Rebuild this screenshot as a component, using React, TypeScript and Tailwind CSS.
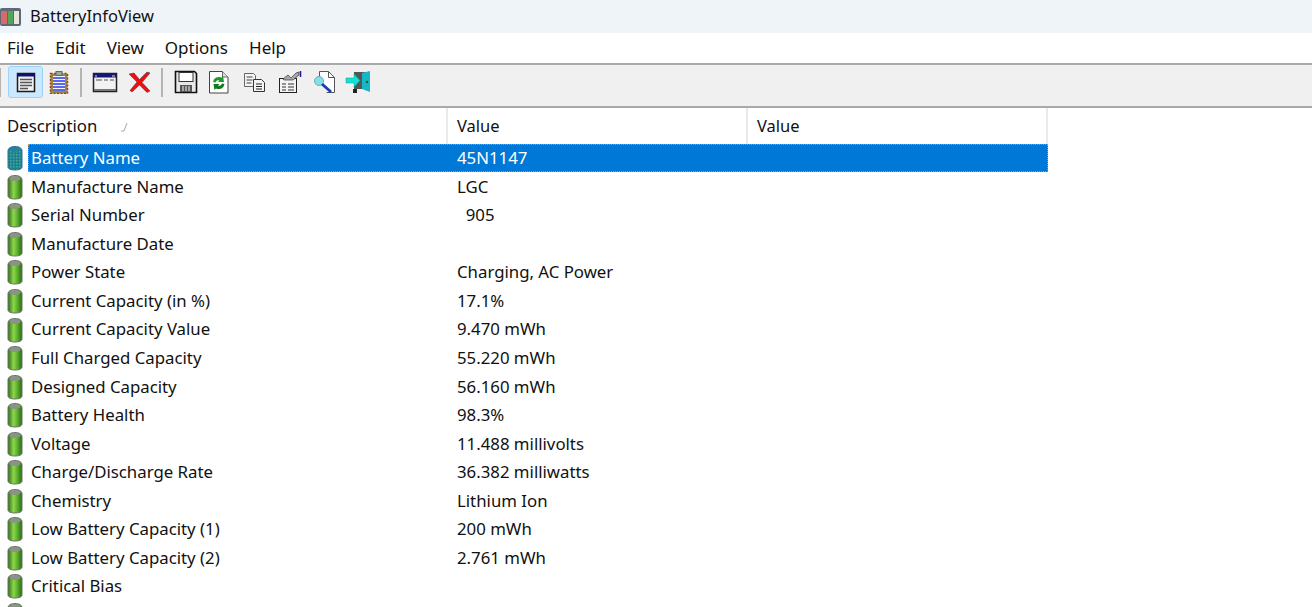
import React from "react";

const rows: [string, string][] = [
  ["Battery Name", "45N1147"],
  ["Manufacture Name", "LGC"],
  ["Serial Number", "\u00a0\u00a0905"],
  ["Manufacture Date", ""],
  ["Power State", "Charging, AC Power"],
  ["Current Capacity (in %)", "17.1%"],
  ["Current Capacity Value", "9.470 mWh"],
  ["Full Charged Capacity", "55.220 mWh"],
  ["Designed Capacity", "56.160 mWh"],
  ["Battery Health", "98.3%"],
  ["Voltage", "11.488 millivolts"],
  ["Charge/Discharge Rate", "36.382 milliwatts"],
  ["Chemistry", "Lithium Ion"],
  ["Low Battery Capacity (1)", "200 mWh"],
  ["Low Battery Capacity (2)", "2.761 mWh"],
  ["Critical Bias", ""],
  ["Number of charge/discharge cycles", "0"],
];

function BatteryIcon({ selected }: { selected?: boolean }) {
  return (
    <svg width="16" height="26" viewBox="0 0 16 26" className="shrink-0">
      <defs>
        <linearGradient id="cell" x1="0" x2="1" y1="0" y2="0">
          <stop offset="0" stopColor="#2f6f18" />
          <stop offset="0.4" stopColor="#8ed64a" />
          <stop offset="0.7" stopColor="#55a82a" />
          <stop offset="1" stopColor="#2a6a14" />
        </linearGradient>
        <pattern id="dots" width="3" height="3" patternUnits="userSpaceOnUse">
          <rect width="3" height="3" fill="#1f7f8f" />
          <rect width="1.5" height="1.5" fill="#3fb08f" />
        </pattern>
      </defs>
      <path d="M1 6c0-3 3-4.500 7-4.500s7 1.500 7 4.500v16c0 2-3 3-7 3s-7-1-7-3z" fill={selected ? "url(#dots)" : "url(#cell)"} stroke={selected ? "#2a6f9f" : "#6b7568"} strokeWidth="1" />
      <ellipse cx="8" cy="4.500" rx="5.500" ry="2.500" fill={selected ? "#2a7f9a" : "#8c928a"} />
    </svg>
  );
}

function ToolIcon({ name }: { name: string }) {
  switch (name) {
    case "report":
      return (
        <svg width="24" height="24" viewBox="0 0 24 24">
          <rect x="3.500" y="3.500" width="17" height="18" fill="#f0f0f0" stroke="#1a1a1a" strokeWidth="1.500" />
          <rect x="3" y="3" width="18" height="3.500" fill="#12126e" />
          <path d="M6 9.500h12M6 12.500h12M6 15.500h12M6 18.500h8" stroke="#555" strokeWidth="1.500" />
        </svg>
      );
    case "clipboard":
      return (
        <svg width="24" height="24" viewBox="0 0 24 24">
          <rect x="3.500" y="3.500" width="17" height="20" fill="#9a8a3a" stroke="#a5352a" strokeDasharray="2 1.500" strokeWidth="1.500" />
          <rect x="6" y="6" width="12" height="15" fill="#f4f4ff" />
          <path d="M6 8h12M6 11h12M6 14h12M6 17h12M6 20h12" stroke="#2a3adf" strokeWidth="1.600" />
          <rect x="9" y="1.500" width="6" height="4" fill="#8fb09a" stroke="#667" />
        </svg>
      );
    case "window":
      return (
        <svg width="26" height="24" viewBox="0 0 26 24">
          <rect x="1.500" y="3.500" width="23" height="18" fill="#f2f2f2" stroke="#222" strokeWidth="1.500" />
          <rect x="2" y="4" width="22" height="3.500" fill="#16167a" />
          <path d="M3 6h2M20 6h3" stroke="#ddd" strokeWidth="1" />
          <path d="M4 10h6M12 10h4M18 10h4" stroke="#888" strokeWidth="1.500" />
          <path d="M2 20h22" stroke="#777" strokeWidth="2" />
        </svg>
      );
    case "delete":
      return (
        <svg width="24" height="24" viewBox="0 0 24 24">
          <path d="M1 4l5-1 5.500 6.500L19 2l3 1-8 9.500 8 8.500-3 1.500-7.500-7.500L4 22l-2-1.500 7-8.500z" fill="#ee1010" stroke="#333" strokeWidth="0.500" />
        </svg>
      );
    case "save":
      return (
        <svg width="24" height="24" viewBox="0 0 24 24">
          <path d="M1.500 1.500h19l2 2v19h-21z" fill="#e8e8e8" stroke="#111" strokeWidth="1.600" />
          <rect x="5" y="2.500" width="14" height="9" fill="#fff" stroke="#333" />
          <rect x="6" y="15" width="12" height="7" fill="#555" />
          <path d="M9 16v5M12 16v5M15 16v5" stroke="#ddd" strokeWidth="1.200" />
        </svg>
      );
    case "refresh":
      return (
        <svg width="24" height="24" viewBox="0 0 24 24">
          <path d="M2.500 1.500h13l5.500 5.500v16h-18.500z" fill="#fff" stroke="#444" />
          <path d="M15.500 1.500v5.500h5.500" fill="#ddd" stroke="#666" />
          <path d="M6 12a6 6 0 0 1 8.500-4.500l1.500-1.500 1 6h-6l1.500-1.500a3 3 0 0 0-4 2z" fill="#1d9a2a" />
          <path d="M17.500 14a6 6 0 0 1-8.500 4.500l-1.500 1.500-1-6h6l-1.500 1.500a3 3 0 0 0 4-2z" fill="#0f7a1f" />
        </svg>
      );
    case "copy":
      return (
        <svg width="24" height="24" viewBox="0 0 24 24">
          <path d="M1.500 3.500h9l2 2v11h-11z" fill="#f4f4f4" stroke="#666" />
          <path d="M3.500 7h6M3.500 10h6M3.500 13h5" stroke="#444" />
          <path d="M10.500 9.500h8l3 3v9h-11z" fill="#f4f4f4" stroke="#333" />
          <path d="M13 14h6M13 16.500h6M13 19h6" stroke="#222" />
        </svg>
      );
    case "props":
      return (
        <svg width="26" height="24" viewBox="0 0 26 24">
          <rect x="2.500" y="8.500" width="17" height="14" fill="#f4f4f4" stroke="#222" />
          <path d="M5 14h4M11 14h6M5 17h4M11 17h6M5 20h4M11 20h6" stroke="#333" />
          <path d="M6 9l5-4 3 3 5-5 3-1v3l-6 5H7z" fill="#aaa" stroke="#333" strokeWidth="0.700" />
          <path d="M23.500 1v6" stroke="#1a1a8a" strokeWidth="1.500" />
        </svg>
      );
    case "find":
      return (
        <svg width="24" height="24" viewBox="0 0 24 24">
          <path d="M6.500 1.500h9l6 6v15h-8" fill="#fff" stroke="#555" />
          <path d="M6.500 1.500v6M15.500 1.500v6h6" fill="none" stroke="#555" />
          <circle cx="6" cy="11" r="4.500" fill="#7fe0e8" stroke="#7ab" />
          <path d="M9 14l9 8" stroke="#1a3fb0" strokeWidth="3" />
        </svg>
      );
    default:
      return (
        <svg width="26" height="24" viewBox="0 0 26 24">
          <path d="M9 2h12v17H9z" fill="#555" />
          <path d="M17 3l8-2v21l-8-3z" fill="#16b8c4" />
          <circle cx="22" cy="12" r="1.200" fill="#063" />
          <path d="M1 8h8V4l6 6.500-6 6.500v-4H1z" fill="#14e0d8" stroke="#0a8" strokeWidth="0.500" />
          <path d="M8 19h4v4H8z" fill="#222" />
        </svg>
      );
  }
}

function Slot({ w, name }: { w: string; name: string }) {
  return (
    <div className={`${w} h-[32px] flex items-center justify-center`}>
      <ToolIcon name={name} />
    </div>
  );
}

export default function App() {
  return (
    <div className="w-[1312px] h-[607px] overflow-hidden bg-white text-[#111] text-[17px] font-['Noto_Sans','Open_Sans',sans-serif]">
      {/* title bar */}
      <div className="h-[33px] bg-[#eff4f9] flex items-center gap-[8px] text-[16.5px]">
        <svg width="22" height="20" viewBox="0 0 22 20">
          <rect x="0" y="1" width="21" height="18" rx="2" fill="#5d6878" />
          <rect x="1" y="4" width="6" height="13" fill="#d86a6a" />
          <rect x="8" y="4" width="5" height="13" fill="#4fa85a" />
          <rect x="14" y="4" width="5" height="13" fill="#e8e4dc" />
        </svg>
        <span>BatteryInfoView</span>
      </div>

      {/* menu */}
      <div className="h-[30px] flex items-center pl-[7px] gap-[21px]">
        <span>File</span>
        <span>Edit</span>
        <span>View</span>
        <span>Options</span>
        <span>Help</span>
      </div>

      {/* toolbar */}
      <div className="h-[45px] bg-[#f0f0f0] border-t-2 border-b-2 border-[#a9a9a9] flex items-start pt-[1px]">
        <div className="w-[1px] h-[29px] mt-[2px] mr-[7px] bg-[#b4b4b4]" />
        <div className="w-[35px] h-[32px] rounded-[3px] bg-[#cce8ff] border border-[#99d1ff] flex items-center justify-center">
          <ToolIcon name="report" />
        </div>
        <Slot w="w-[32px]" name="clipboard" />
        <div className="w-[2px] h-[29px] mt-[2px] ml-[5px] mr-[7px] bg-[#b4b4b4]" />
        <Slot w="w-[32px]" name="window" />
        <Slot w="w-[38px]" name="delete" />
        <div className="w-[2px] h-[29px] mt-[2px] ml-[2px] mr-[6px] bg-[#b4b4b4]" />
        <Slot w="w-[34px]" name="save" />
        <Slot w="w-[32px]" name="refresh" />
        <Slot w="w-[40px]" name="copy" />
        <Slot w="w-[30px]" name="props" />
        <Slot w="w-[40px]" name="find" />
        <Slot w="w-[26px]" name="exit" />
      </div>

      {/* table header */}
      <div className="h-[36px] w-[1048px] flex">
        <div className="w-[448px] h-full pl-[7px] flex items-center border-r-2 border-[#eaeaea] text-[16.8px]">
          <span>Description</span>
          <svg width="10" height="10" viewBox="0 0 10 10" className="ml-[22px] mt-[2px]">
            <path d="M2 9h3l3-8" fill="none" stroke="#aaa" strokeWidth="1" />
          </svg>
        </div>
        <div className="w-[300px] h-full pl-[9px] flex items-center border-r-2 border-[#eaeaea] text-[16.5px]">Value</div>
        <div className="w-[300px] h-full pl-[9px] flex items-center border-r-2 border-[#eaeaea] text-[16.5px]">Value</div>
      </div>

      {/* rows */}
      <div className="w-[1048px] text-[16.8px]">
        {rows.map(([name, value], i) => (
          <div key={name} className="h-[28.55px] flex items-center pl-[7px] whitespace-nowrap">
            <BatteryIcon selected={i === 0} />
            {i === 0 ? (
              <div className="ml-[5px] flex-1 h-[28px] bg-[#0078d7] text-white flex items-center outline-1 -outline-offset-1 outline-dotted outline-[#e08a3c]">
                <span className="w-[429px] pl-[3px] pb-[1px]">{name}</span>
                <span className="pb-[1px]">{value}</span>
              </div>
            ) : (
              <>
                <span className="ml-[8px] w-[426px] pb-[1px]">{name}</span>
                <span className="pb-[1px]">{value}</span>
              </>
            )}
          </div>
        ))}
      </div>
    </div>
  );
}
